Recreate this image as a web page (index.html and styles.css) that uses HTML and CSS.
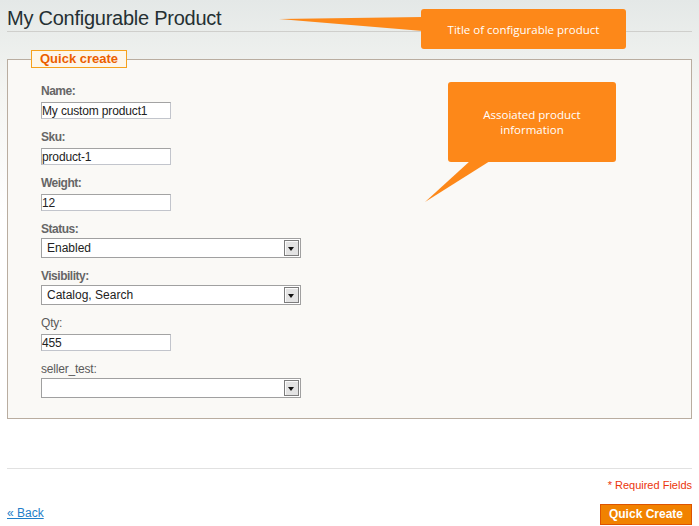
FILE: index.html
```html
<!DOCTYPE html>
<html lang="en">
<head>
    <meta charset="UTF-8">
    <title>My Configurable Product</title>
    <link rel="stylesheet" href="styles.css">
</head>
<body>
    <div class="page">
        <div class="head">
            <h3 class="title">My Configurable Product</h3>
        </div>

        <fieldset class="box">
            <legend class="box-legend">Quick create</legend>
            <div class="fields">
                <label class="lbl strong" for="name">Name:</label>
                <input class="txt" id="name" type="text" value="My custom product1">

                <label class="lbl strong" for="sku">Sku:</label>
                <input class="txt" id="sku" type="text" value="product-1">

                <label class="lbl strong" for="weight">Weight:</label>
                <input class="txt" id="weight" type="text" value="12">

                <label class="lbl strong" for="status">Status:</label>
                <div class="sel-wrap">
                    <select class="sel" id="status">
                        <option>Enabled</option>
                        <option>Disabled</option>
                    </select>
                    <span class="sel-btn"></span>
                </div>

                <label class="lbl strong" for="visibility">Visibility:</label>
                <div class="sel-wrap">
                    <select class="sel" id="visibility">
                        <option>Catalog, Search</option>
                        <option>Catalog</option>
                        <option>Search</option>
                        <option>Not Visible Individually</option>
                    </select>
                    <span class="sel-btn"></span>
                </div>

                <label class="lbl" for="qty">Qty:</label>
                <input class="txt" id="qty" type="text" value="455">

                <label class="lbl" for="seller">seller_test:</label>
                <div class="sel-wrap last">
                    <select class="sel" id="seller">
                        <option></option>
                    </select>
                    <span class="sel-btn"></span>
                </div>
            </div>
        </fieldset>

        <div class="foot">
            <p class="required">* Required Fields</p>
            <div class="actions">
                <a class="back" href="#">&laquo; Back</a>
                <button class="btn" type="button">Quick Create</button>
            </div>
        </div>
    </div>

    <!-- annotation callouts -->
    <svg class="tail tail-title" width="144" height="15" viewBox="0 0 144 15">
        <polygon points="0,2 144,0 144,14" fill="#fd8819"/>
    </svg>
    <div class="callout callout-title">Title of configurable product</div>

    <svg class="tail tail-info" width="66" height="42" viewBox="0 0 66 42">
        <polygon points="45,0 65,0 0,41" fill="#fd8819"/>
    </svg>
    <div class="callout callout-info">Assoiated product<br>information</div>
</body>
</html>
```

FILE: styles.css
```css
html, body {
    margin: 0;
    padding: 0;
}
body {
    position: relative;
    min-height: 526px;
    font-family: "Liberation Sans", Arial, sans-serif;
    font-size: 12px;
    color: #2f2f2f;
    background: linear-gradient(#e4e8e7, #f4f5f2 90px, #ffffff 220px);
}
.page {
    padding: 0 7px;
}

/* header */
.head {
    padding: 6px 0 1px;
    border-bottom: 1px solid #cfcfcc;
}
.title {
    margin: 0;
    font-size: 20px;
    line-height: 24px;
    font-weight: normal;
    letter-spacing: -0.25px;
    color: #253033;
}

/* fieldset */
.box {
    margin: 18px 0 0;
    padding: 0 0 20px 23px;
    border: 1px solid #b9ada0;
    background: #faf9f6;
    min-width: 0;
}
.box-legend {
    margin: 0;
    padding: 0 8px 0 8px;
    border: 1px solid #f6a11c;
    background: #fdf6ea;
    color: #eb5e00;
    font-size: 13px;
    font-weight: bold;
    line-height: 16px;
}
.fields {
    padding: 16px 0 0 10px;
}
.lbl {
    display: block;
    line-height: 15px;
    margin-bottom: 3px;
    color: #5a5a5a;
    letter-spacing: -0.2px;
}
.lbl.strong {
    font-weight: bold;
    color: #666;
    letter-spacing: -0.5px;
}
.txt {
    display: block;
    box-sizing: border-box;
    width: 130px;
    height: 17px;
    margin: 0 0 11px;
    padding: 0;
    border: 1px solid #c2c5cc;
    border-top-color: #a3a3a3;
    border-left-color: #b0b0b0;
    background: #fff;
    font-family: "Liberation Sans", Arial, sans-serif;
    font-size: 12px;
    letter-spacing: -0.15px;
    color: #222;
    outline: none;
}

/* select */
.sel-wrap {
    position: relative;
    width: 260px;
    height: 20px;
    margin: -2px 0 11px;
}
.sel-wrap.last {
    margin-bottom: 0;
}
.sel {
    display: block;
    box-sizing: border-box;
    width: 100%;
    height: 20px;
    margin: 0;
    padding: 0 20px 0 5px;
    border: 1px solid #a0a0a0;
    border-radius: 0;
    background: #fff;
    font-family: "Liberation Sans", Arial, sans-serif;
    font-size: 12px;
    color: #222;
    -webkit-appearance: none;
    appearance: none;
    outline: none;
}
.sel-btn {
    position: absolute;
    top: 2px;
    right: 2px;
    box-sizing: border-box;
    width: 15px;
    height: 16px;
    border: 1px solid #7c7c7c;
    background: #e3e3e3;
    box-shadow: inset 1px 1px 0 #fbfbfb;
    pointer-events: none;
}
.sel-btn::after {
    content: "";
    position: absolute;
    left: 3px;
    top: 6px;
    border-left: 3.5px solid transparent;
    border-right: 3.5px solid transparent;
    border-top: 4px solid #111;
}

/* footer */
.foot {
    margin-top: 49px;
    padding-top: 9px;
    border-top: 1px solid #e1e1e1;
}
.required {
    margin: 0;
    text-align: right;
    font-size: 11px;
    line-height: 14px;
    color: #eb340a;
}
.actions {
    display: flex;
    justify-content: space-between;
    align-items: flex-end;
    margin-top: 12px;
}
.back {
    padding-bottom: 4px;
    line-height: 15px;
    color: #1e7ec8;
    text-decoration: underline;
}
.btn {
    box-sizing: border-box;
    height: 21px;
    margin: 0;
    padding: 0 8px;
    border: 1px solid #de5400;
    background: #f18200;
    color: #fff;
    font-family: "Liberation Sans", Arial, sans-serif;
    font-size: 12px;
    font-weight: bold;
    line-height: 19px;
    cursor: pointer;
}

/* callouts laid over the page */
.callout {
    position: absolute;
    display: flex;
    align-items: center;
    justify-content: center;
    text-align: center;
    box-sizing: border-box;
    border-radius: 3px;
    background: #fd8819;
    color: #fff;
    font-family: "Open Sans", sans-serif;
    font-size: 11.5px;
    line-height: 15px;
}
.callout-title {
    left: 421px;
    top: 9px;
    width: 205px;
    height: 40px;
}
.callout-info {
    left: 448px;
    top: 82px;
    width: 168px;
    height: 80px;
}
.tail {
    position: absolute;
    display: block;
}
.tail-title {
    left: 279px;
    top: 17px;
}
.tail-info {
    left: 425px;
    top: 161px;
}
```
